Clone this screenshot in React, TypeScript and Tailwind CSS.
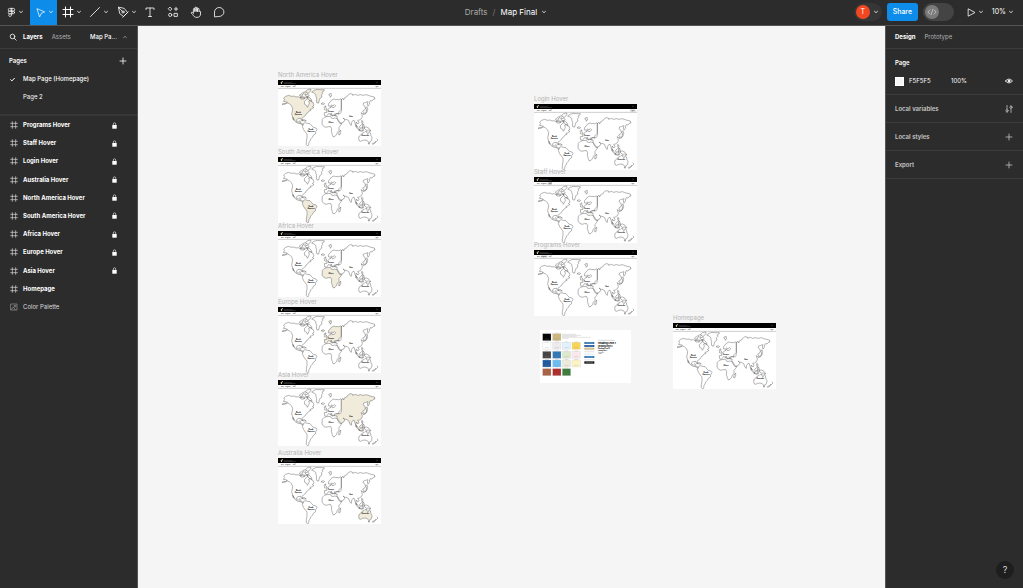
import { useState, type ReactNode } from "react";

type Region = "na" | "sa" | "africa" | "europe" | "asia" | "australia";

type MapFrameData = {
  name: string;
  place: string;
  region?: Region;
  tab?: "programs" | "staff" | "login";
};

const mapFrames: MapFrameData[] = [
  { name: "North America Hover", place: "left-[140px] top-[44px]", region: "na" },
  { name: "South America Hover", place: "left-[140px] top-[121px]", region: "sa" },
  { name: "Africa Hover", place: "left-[140px] top-[195px]", region: "africa" },
  { name: "Europe Hover", place: "left-[140px] top-[271px]", region: "europe" },
  { name: "Asia Hover", place: "left-[140px] top-[344px]", region: "asia" },
  { name: "Australia Hover", place: "left-[140px] top-[422px]", region: "australia" },
  { name: "Login Hover", place: "left-[396px] top-[68px]", tab: "login" },
  { name: "Staff Hover", place: "left-[396px] top-[141px]", tab: "staff" },
  { name: "Programs Hover", place: "left-[396px] top-[214px]", tab: "programs" },
  { name: "Homepage", place: "left-[535px] top-[287px]" },
];

const layers = [
  { name: "Programs Hover", locked: true },
  { name: "Staff Hover", locked: true },
  { name: "Login Hover", locked: true },
  { name: "Australia Hover", locked: true },
  { name: "North America Hover", locked: true },
  { name: "South America Hover", locked: true },
  { name: "Africa Hover", locked: true },
  { name: "Europe Hover", locked: true },
  { name: "Asia Hover", locked: true },
  { name: "Homepage", locked: false },
];

const continents: Record<Region, string> = {
  na: "M30 112L36 109 41 109 46 106 41 104 34 103 38 98 35 93 41 88 50 85 58 88 66 87 72 90 79 89 85 92 91 91 96 94 101 93 105 89 108 94 102 99 97 104 98 112 104 115 106 121 109 116 112 109 110 102 115 100 119 105 123 106 126 114 121 119 126 121 121 125 114 127 117 130 111 132 108 137 103 140 100 146 94 150 90 154 91 161 88 160 86 154 78 155 74 158 74 164 79 165 84 161 86 163 83 168 89 169 94 173 92 174 85 170 79 169 71 165 67 159 63 151 66 160 63 157 61 147 59 140 61 132 62 124 58 116 52 110 46 108 38 112z M119 75l7-5 9-3 9 1 13 0-1 4-6 3 2 5-4 4 2 6-5 3-3 6-2 9-5 0-2-6 1-7-2-6-1-7-5-4z M82 84l6-4 5 2-3 5-5 1z M84 91l8-2 7 2-3 5-9 0z M92 77l8-3 2 3-5 5z M101 73l6-5 9-2 1 5-5 4-3 5-4-2z M99 83l8-1 5 4-4 3-7-1z M104 90l8 1 6 6 2 6-6-2-6-5z M90 159l7-1 6 4-7 0z",
  sa: "M94 170l5-3 7 2 8 1 5 6 5 5 8 2 3 5-4 6-1 7-6 4-3 6-5 5-2 6-3 4-1 8-3 3-4-4 0-9 2-11 0-12-5-6-5-7-4-9 2-6z",
  africa: "M151 157l6-6 7-2 11-1 2 4 6 3 5-2 7 2 4 8 4 6 7 0-4 6-5 6 0 9-5 6-2 6-5 6-5 2-3-7-3-10 1-8-3-6-7 0-7 2-7-3-5-7z M201 195l5-6 0 7-3 8-3-1z",
  europe: "M158 146l-1-9 8-1-1-6 5-3 4-5 4-1 0-4 3 1 1 4 6-1 4-5-3-3-5 3-4-2-4 3-5 0-1-6 5-6 5-6 7-3 5 2 4-1 5 2 3-3 5 0 0 31-5 5-3 3 1 6-6-2-4 3 0 4-6-2 0 3-5-3-3-6 0 4 5 5-3 0-5-6-5-1-3 5-3 3z M157 128l2-4-3-2 3-5 3 0-1 5 4 4-4 3z M147 110l6-3 5 3-4 3z M170 84l3-4 5 0-1 4 2 1-4 6-1-5z",
  asia: "M208 98L213 94 215 99 218 92 224 90 227 85 234 80 241 81 242 85 250 82 257 85 265 83 274 85 283 83 294 87 307 90 309 96 304 97 300 102 295 101 293 105 292 112 288 117 286 111 288 104 281 106 275 108 273 113 279 118 280 124 277 130 272 132 275 137 272 140 267 137 270 143 271 149 268 155 262 159 257 160 261 166 258 171 253 165 252 173 256 180 252 177 249 169 247 161 243 160 239 166 238 175 234 172 230 161 225 158 218 156 213 153 219 159 216 164 207 169 203 166 198 157 194 150 196 147 187 146 187 141 195 140 203 141 207 137 208 130z M282 137l2-8-3-6 4-4 2 8-2 7-3 5-7 4-2-2 7-3z M252 175l8 9 4 6-5-2-8-9z M263 178l5-5 4 2-2 8-6 1z M272 180l5-2-2 9-4 0z M269 160l4 3-1 6 5 6-4-1-4-8z M260 189l10 1 5 1-7 2z",
  australia: "M262 207l6-4 3-5 5-1 4-4 5 0-1 4 5 3 3-7 3 5 2 8 3 6-1 7-4 6-5 1-4-5-7-2-7 1-6 3-5-2-1-8z M288 228l5 0-2 4z",
};

const regions = Object.keys(continents) as Region[];

const continentNames = [
  { lines: ["North", "America"], x: 79, y: 138 },
  { lines: ["South", "America"], x: 117, y: 189 },
  { lines: ["Africa"], x: 177, y: 168 },
  { lines: ["Europe"], x: 177, y: 135 },
  { lines: ["Asia"], x: 237, y: 151 },
  { lines: ["Australia"], x: 280, y: 208 },
];

function WorldMap({ region, tab }: { region?: Region; tab?: MapFrameData["tab"] }) {
  return (
    <svg
      viewBox="18 39 309 198"
      className="block h-[66px] w-[103px] bg-white font-['Inter',sans-serif]"
      role="img"
      aria-label="World map"
    >
      <rect x="18" y="39" width="309" height="15" fill="#000" />
      <path d="M26 45h3v-2h4v3h-3v5h-3z" fill="#d3bd86" />
      <path d="M35 47h26M35 49.500h36" stroke="#777" strokeWidth="1" />
      <circle cx="315" cy="46" r="1.500" fill="none" stroke="#888" strokeWidth=".8" />
      {tab === "programs" && <rect x="38" y="55" width="20" height="7" fill="#ddd" />}
      {tab === "staff" && <rect x="59" y="55" width="13" height="7" fill="#ccc" />}
      {tab === "login" && <rect x="306" y="55" width="17" height="7" fill="#ddd" />}
      <g fontSize="3.500" fontWeight="600" fill="#333">
        <text x="27" y="59.500">Map</text>
        <text x="39" y="59.500">Programs</text>
        <text x="62" y="59.500">Staff</text>
        <text x="309" y="59.500">Login</text>
      </g>
      <path d="M18 64h309" stroke="#999" strokeWidth="1.500" />
      {regions.map((id) => (
        <path
          key={id}
          d={continents[id]}
          fill={region === id ? "#f0ebdb" : "none"}
          stroke="#444"
          strokeWidth="1.200"
          strokeLinejoin="round"
        />
      ))}
      <path
        d="M315 215l3 4-4 4M312 222l-5 5-6 3 1 2 6-3 5-5z M277 181l7-1 7 4 6 8-8-3-5 1-7-5z"
        fill="none"
        stroke="#444"
        strokeWidth="1.200"
      />
      <g fontSize="5" fontWeight="800" fill="#000" textAnchor="middle">
        {continentNames.map((c) =>
          c.lines.map((line, i) => (
            <text key={line} x={c.x} y={c.y + i * 5}>
              {line}
            </text>
          )),
        )}
      </g>
    </svg>
  );
}

const swatches = [
  { c: "#050505", x: 44, y: 41 },
  { c: "#cdb77f", x: 74, y: 41 },
  { c: "#fefefe", x: 44, y: 67 },
  { c: "#ececee", x: 74, y: 67 },
  { c: "#e2f2fc", x: 103, y: 67 },
  { c: "#f8d554", x: 132, y: 67 },
  { c: "#454545", x: 44, y: 94 },
  { c: "#3478b8", x: 74, y: 94 },
  { c: "#dce9cd", x: 103, y: 94 },
  { c: "#fbe8ec", x: 132, y: 94 },
  { c: "#2059a0", x: 44, y: 120 },
  { c: "#6cbdf0", x: 74, y: 120 },
  { c: "#efebdb", x: 103, y: 120 },
  { c: "#fdf4c5", x: 132, y: 120 },
  { c: "#aa6245", x: 44, y: 146 },
  { c: "#ad2d2b", x: 74, y: 146 },
  { c: "#3b7d3c", x: 103, y: 146 },
];

function PaletteBoard() {
  return (
    <svg
      viewBox="36 31 273 157"
      className="absolute left-[402px] top-[304px] h-[53px] w-[91px] bg-white font-['Inter',sans-serif]"
      role="img"
      aria-label="Color Palette"
    >
      {swatches.map((s) => (
        <g key={s.c}>
          <rect x={s.x} y={s.y} width="25" height="21" fill={s.c} stroke="#ccc" strokeWidth=".8" />
          <path d={`M${s.x + 7} ${s.y - 1.5}h11`} stroke="#aaa" strokeWidth="1" />
          <path d={`M${s.x + 6} ${s.y + 16}h13`} stroke="#888" strokeWidth=".7" />
        </g>
      ))}
      <path d="M102 43h41M102 46h57M102 49h44M102 52h86M102 55h20" stroke="#aaa" strokeWidth="1" />
      <rect x="169" y="66" width="30" height="6" fill="#3478b8" />
      <rect x="169" y="75" width="30" height="6" fill="#2059a0" />
      <rect x="169" y="83" width="30" height="6" fill="#cdb77f" />
      <rect x="169" y="92" width="30" height="5" fill="#e8e8e8" />
      <rect x="169" y="101" width="30" height="5" fill="#e2f2fc" />
      <rect x="169" y="108" width="30" height="6" fill="#3478b8" />
      <rect x="169" y="117" width="30" height="4" fill="#eee" />
      <rect x="169" y="124" width="30" height="7" fill="#111" />
      <path d="M173 69h22M173 78h22M173 86h22M173 111h22M173 127h22" stroke="#ddd" strokeWidth="1" />
      <path d="M210 61h50" stroke="#888" strokeWidth="1" />
      <g fill="#000" fontWeight="800">
        <text x="210" y="71" fontSize="7">Heading Level 1</text>
        <text x="210" y="80" fontSize="5.500">Heading Level 2</text>
        <text x="210" y="87" fontSize="4.500">Heading Level 3</text>
        <text x="210" y="93" fontSize="3.500">Heading Level 4</text>
        <text x="210" y="98" fontSize="3.500" fontWeight="400">Paragraph</text>
        <text x="210" y="102" fontSize="3" fontWeight="400">Caption</text>
      </g>
    </svg>
  );
}

function Glyph({ children, className = "size-3", box = "0 0 12 12" }: { children: ReactNode; className?: string; box?: string }) {
  return (
    <svg
      viewBox={box}
      className={`shrink-0 ${className}`}
      fill="none"
      stroke="currentColor"
      strokeWidth=".8"
      strokeLinecap="round"
      strokeLinejoin="round"
      aria-hidden="true"
    >
      {children}
    </svg>
  );
}

const Chevron = ({ up = false }: { up?: boolean }) => (
  <Glyph className="size-1" box="0 0 4 4">
    <path d={up ? "M.5 2.700L2 1.300l1.500 1.400" : "M.5 1.300L2 2.700l1.500-1.400"} />
  </Glyph>
);

const Plus = () => (
  <Glyph className="size-2" box="0 0 8 8">
    <path d="M4 1v6M1 4h6" />
  </Glyph>
);

const FrameGlyph = ({ className }: { className?: string }) => (
  <Glyph className={className}>
    <path d="M3.500 1v10M8.500 1v10M1 3.500h10M1 8.500h10" strokeWidth="1" />
  </Glyph>
);

const Lock = () => (
  <svg viewBox="0 0 5 7" className="h-[7px] w-[5px] shrink-0" role="img" aria-label="Locked">
    <path d="M.3 3h4.400v3.700h-4.400z" fill="#fff" />
    <path d="M1.300 3V2a1.200 1.200 0 0 1 2.400 0v1" fill="none" stroke="#ddd" strokeWidth=".7" />
  </svg>
);

const menuTools = [
  {
    label: "Main menu",
    width: "w-[30px]",
    icon: (
      <Glyph className="h-[11px] w-[9px]" box="0 0 9 12">
        <path d="M4.500 1.500h-2a1.500 1.500 0 0 0 0 3h2zM4.500 1.500h2a1.500 1.500 0 0 1 0 3h-2zM4.500 4.500h-2a1.500 1.500 0 0 0 0 3h2zM4.500 7.500h-2A1.500 1.500 0 1 0 4.500 9z" />
        <circle cx="6.300" cy="6" r="1.500" />
      </Glyph>
    ),
  },
  {
    label: "Move",
    width: "w-[27px] bg-[#0d8ce9]",
    icon: (
      <Glyph className="size-[11px]">
        <path d="M2.500 2l8 3.300-3.600 1.500L5.200 10.500z" />
      </Glyph>
    ),
  },
  { label: "Frame", width: "w-[27px] pl-[2px]", icon: <FrameGlyph className="size-3" /> },
  {
    label: "Line",
    width: "w-[27px] pl-[2px]",
    icon: (
      <Glyph className="size-3">
        <path d="M1.500 10.500l9-9" />
      </Glyph>
    ),
  },
  {
    label: "Pen",
    width: "w-[27px] pl-[4px]",
    icon: (
      <Glyph className="size-3">
        <path d="M1.500 1.500l1.200 6 3.800 3 4-4-3-3.800zM1.500 1.500l3.700 3.700M5.800 11.300l5.500-5.500" />
        <circle cx="6" cy="6" r="1.100" />
      </Glyph>
    ),
  },
];

const plainTools = [
  {
    label: "Text",
    icon: <path d="M2 3.500V2h8v1.500M6 2v8.500M4.500 10.500h3" />,
  },
  {
    label: "Resources",
    icon: (
      <>
        <path d="M3.200 1.300l1.700 1.700-1.700 1.700L1.500 3zM9 1.300v3.400M7.300 3h3.400M7.400 7.400h3v3h-3z" />
        <circle cx="3.200" cy="8.900" r="1.600" />
      </>
    ),
  },
  {
    label: "Hand tool",
    icon: (
      <path d="M3.400 7V3.200a.7.7 0 0 1 1.400 0V5.500M4.800 5V1.900a.7.7 0 0 1 1.400 0V5.300M6.200 5V2.200a.7.7 0 0 1 1.400 0V5.500M7.600 5.300V3.200a.7.7 0 0 1 1.500 0v2.600a.7.7 0 0 1 1.400 0V8c0 2-1.300 3.400-3.500 3.400-2.500 0-3.300-1.200-4.200-2.700L1.300 7.100c-.3-.7.5-1.300 1.100-.8l1 .9" />
    ),
  },
  {
    label: "Add comment",
    icon: <path d="M1.500 10.500V6a4.700 4.500 0 1 1 4.700 4.500z" />,
  },
];

function PanelRow({ title, action, children }: { title: string; action: string; children: ReactNode }) {
  return (
    <section className="flex h-7 items-center justify-between border-b border-[#3b3b3b] pl-[9px] pr-[10px]">
      <h2 className="font-semibold text-[#c8c8c8]">{title}</h2>
      <button type="button" aria-label={action} className="text-[#c0c0c0]">
        {children}
      </button>
    </section>
  );
}

export default function App() {
  const [devMode, setDevMode] = useState(false);

  return (
    <div className="flex h-screen flex-col overflow-hidden bg-[#2c2c2c] font-['Inter',sans-serif] text-[6px] leading-[10px] text-white">
      <header className="flex h-[26px] shrink-0 items-stretch border-b border-[#555]">
        <nav aria-label="Tools" className="flex flex-1">
          {menuTools.map((t) => (
            <button key={t.label} type="button" aria-label={t.label} className={`flex items-center justify-center gap-[3px] pb-px ${t.width}`}>
              {t.icon}
              <Chevron />
            </button>
          ))}
          {plainTools.map((t) => (
            <button key={t.label} type="button" aria-label={t.label} className="flex w-[23px] items-center justify-center pb-px">
              <Glyph>{t.icon}</Glyph>
            </button>
          ))}
        </nav>
        <div className="flex items-center gap-[5px] pb-[2px] pr-[2px] text-[8px] leading-3">
          <a href="#drafts" className="text-[#aaa]">Drafts</a>
          <span className="text-[#777]">/</span>
          <button type="button" className="flex items-center gap-[5px]">
            Map Final
            <Chevron />
          </button>
        </div>
        <div className="flex flex-1 items-center justify-end pb-px pr-[10px]">
          <button type="button" aria-label="Account T" className="flex h-[18px] w-7 items-center gap-1 rounded-full bg-[#363636] px-[2px]">
            <span className="flex size-[14px] items-center justify-center rounded-full bg-[#f24822] text-[7px]">T</span>
            <Chevron />
          </button>
          <button type="button" className="ml-[5px] h-[18px] w-[31px] rounded-[3px] bg-[#0d8ce9] text-[7px] font-medium">Share</button>
          <button
            type="button"
            role="switch"
            aria-checked={devMode}
            aria-label="Dev Mode"
            onClick={() => setDevMode(!devMode)}
            className={`ml-[5px] flex h-[18px] w-[31px] items-center rounded-full bg-[#444] px-[2px] ${devMode ? "justify-end" : ""}`}
          >
            <span className="flex size-[14px] items-center justify-center rounded-full bg-[#7b7b7b] text-[#ddd]">
              <Glyph className="size-[10px]">
                <path d="M3.500 3.500L1 6l2.500 2.500M8.500 3.500L11 6 8.500 8.500M7 3L5 9" />
              </Glyph>
            </span>
          </button>
          <button type="button" aria-label="Present" className="ml-[13px] flex items-center gap-[3px]">
            <Glyph className="size-[9px]" box="0 0 9 9">
              <path d="M1.500 1l6.500 3.500L1.500 8z" />
            </Glyph>
            <Chevron />
          </button>
          <button type="button" aria-label="Zoom 10%" className="ml-[9px] flex items-center gap-[3px] text-[7px]">
            10%
            <Chevron />
          </button>
        </div>
      </header>

      <div className="flex min-h-0 flex-1">
        <aside className="w-[138px] shrink-0 border-r border-[#555]">
          <div className="flex h-[23px] items-center border-b border-[#3b3b3b] pl-[9px] pr-[10px]">
            <button type="button" aria-label="Search" className="w-[14px]">
              <Glyph className="size-2" box="0 0 8 8">
                <circle cx="3.500" cy="3.500" r="2.300" />
                <path d="M5.300 5.300L7.200 7.200" />
              </Glyph>
            </button>
            <button type="button" className="font-bold">Layers</button>
            <button type="button" className="ml-[9px] text-[#b3b3b3]">Assets</button>
            <button type="button" className="ml-auto flex items-center gap-[6px] font-medium">
              Map Pa...
              <span className="text-[#999]"><Chevron up /></span>
            </button>
          </div>
          <section className="h-[67px] border-b-2 border-[#383838] pt-[2px]">
            <div className="flex h-[19px] items-center justify-between pl-[9px] pr-[10px]">
              <h2 className="font-semibold">Pages</h2>
              <button type="button" aria-label="Add page"><Plus /></button>
            </div>
            <button type="button" className="flex h-[18px] w-full items-center pl-[10px] font-medium">
              <span className="w-[13px]">
                <Glyph className="size-[5px]" box="0 0 6 6">
                  <path d="M.8 3.200l1.500 1.500 3-3.200" strokeWidth="1.200" />
                </Glyph>
              </span>
              Map Page (Homepage)
            </button>
            <button type="button" className="flex h-[18px] w-full items-center pl-[23px]">Page 2</button>
          </section>
          <ul className="grid h-[200px] auto-rows-fr">
            {layers.map((l) => (
              <li key={l.name} className="flex items-center pl-[10px] pr-[20px]">
                <button type="button" className="flex flex-1 items-center gap-[5px] text-left font-bold">
                  <span className="text-[#ddd]"><FrameGlyph className="size-2" /></span>
                  {l.name}
                </button>
                {l.locked && <Lock />}
              </li>
            ))}
            <li className="flex items-center pl-[10px]">
              <button type="button" className="flex items-center gap-[5px] text-[#ddd]">
                <span className="text-[#888]">
                  <Glyph className="size-2" box="0 0 8 8">
                    <path d="M1 1h6v6H1zM1.500 6.500L3.300 4l2 2.800M4.500 2.500h1.300v1.300H4.500z" />
                  </Glyph>
                </span>
                Color Palette
              </button>
            </li>
          </ul>
        </aside>

        <main className="relative min-w-0 flex-1 overflow-hidden bg-[#f5f5f5]">
          {mapFrames.map((f) => (
            <figure key={f.name} className={`absolute w-[103px] ${f.place}`}>
              <figcaption className="h-[10px] whitespace-nowrap text-[#b3b3b3]">{f.name}</figcaption>
              <WorldMap region={f.region} tab={f.tab} />
            </figure>
          ))}
          <PaletteBoard />
        </main>

        <aside className="relative w-[138px] shrink-0 border-l border-[#555]">
          <div className="flex h-[23px] items-center gap-[9px] border-b border-[#3b3b3b] pl-[9px]">
            <button type="button" className="font-bold">Design</button>
            <button type="button" className="text-[#b3b3b3]">Prototype</button>
          </div>
          <section className="h-[46px] border-b border-[#3b3b3b] pl-[9px] pr-[10px] pt-[9px]">
            <h2 className="font-semibold">Page</h2>
            <div className="mt-2 flex items-center">
              <span className="size-[9px] shrink-0 border border-white bg-[#f5f5f5]" />
              <input aria-label="Page color" defaultValue="F5F5F5" className="ml-[5px] w-[42px] bg-transparent p-0 outline-none" />
              <input aria-label="Opacity" defaultValue="100%" className="w-7 bg-transparent p-0 outline-none" />
              <button type="button" aria-label="Toggle visibility" className="ml-auto">
                <Glyph className="size-2" box="0 0 8 8">
                  <path d="M.5 4Q4 0 7.500 4 4 8 .5 4z" />
                  <circle cx="4" cy="4" r="1" fill="currentColor" />
                </Glyph>
              </button>
            </div>
          </section>
          <PanelRow title="Local variables" action="Open variables">
            <Glyph className="size-2" box="0 0 8 8">
              <path d="M2 .5v4M2 7v.5M6 .8V1M6 3.500v4" />
              <circle cx="2" cy="5.700" r="1.100" />
              <circle cx="6" cy="2.200" r="1.100" />
            </Glyph>
          </PanelRow>
          <PanelRow title="Local styles" action="Add style"><Plus /></PanelRow>
          <PanelRow title="Export" action="Add export"><Plus /></PanelRow>
          <button
            type="button"
            aria-label="Help"
            className="absolute bottom-[9px] right-[9px] flex size-[18px] items-center justify-center rounded-full bg-[#1e1e1e] text-[9px] text-[#ddd]"
          >
            ?
          </button>
        </aside>
      </div>
    </div>
  );
}
